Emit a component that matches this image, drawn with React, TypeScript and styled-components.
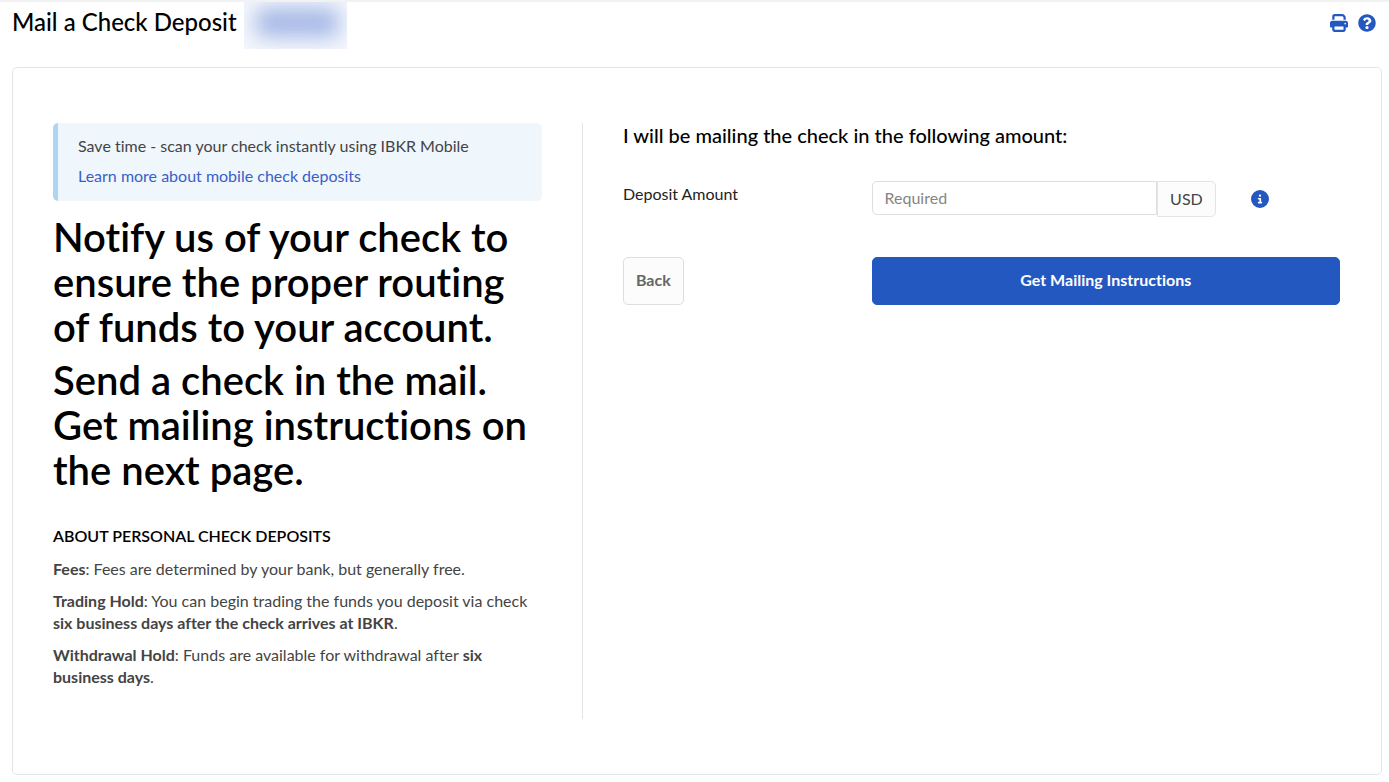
import React from 'react';
import styled, { createGlobalStyle } from 'styled-components';
import { FaQuestionCircle } from 'react-icons/fa';
import { FaPrint, FaCircleInfo } from 'react-icons/fa6';

const GlobalStyle = createGlobalStyle`
  *, *::before, *::after { box-sizing: border-box; }
  body {
    margin: 0;
    background: #fff;
    color: #444;
    font-family: Lato, 'Open Sans', sans-serif;
    font-size: 16px;
    line-height: 22px;
    font-variant-ligatures: none;
  }
  h1, h2, h3, p { margin: 0; }
  button, input { font: inherit; }
`;

const Page = styled.div`
  border-top: 2px solid #f2f2f2;
  padding: 0 7px 7px 12px;
`;

const Header = styled.header`
  display: flex;
  align-items: flex-start;
  height: 65px;
`;

const Title = styled.h1`
  padding-top: 4px;
  color: #000;
  font-size: 24px;
  line-height: 32px;
  font-weight: 500;
`;

const AccountBadge = styled.span`
  width: 103px;
  height: 47px;
  margin-left: 7px;
  padding: 6px 8px 12px 12px;
  overflow: hidden;
  background: #f3f6fc;

  &::before {
    content: '';
    display: block;
    height: 29px;
    border-radius: 8px;
    background: #a6b9e6;
    filter: blur(10px);
  }
`;

const HeaderActions = styled.div`
  display: flex;
  gap: 10px;
  margin-left: auto;
  padding: 12px 6px 0 0;
`;

const IconButton = styled.button`
  display: flex;
  padding: 0;
  border: 0;
  background: none;
  color: #2458c1;
  font-size: 18px;
  cursor: pointer;
`;

const Panel = styled.main`
  display: grid;
  grid-template-columns: 7fr 10fr;
  padding: 55px 41px 55px 40px;
  border: 1px solid #e3e4e5;
  border-radius: 5px;
`;

const Intro = styled.section`
  padding: 0 40px 31px 0;
  border-right: 1px solid #e3e4e5;
`;

const Notice = styled.aside`
  display: flex;
  flex-direction: column;
  gap: 8px;
  margin-bottom: 14px;
  padding: 12px 20px 14px;
  border-left: 5px solid #aed6f2;
  border-radius: 5px;
  background: #eff6fc;
`;

const TextLink = styled.a`
  color: #3a5fc8;
  text-decoration: none;
`;

const Headline = styled.h2`
  margin-bottom: 8px;
  color: #000;
  font-size: 40px;
  line-height: 45px;
  font-weight: 600;
`;

const SectionTitle = styled.h3`
  margin: 32px 0 11px;
  color: #000;
  font-size: 16px;
  line-height: 22px;
  font-weight: 600;
`;

const Detail = styled.p`
  & + & { margin-top: 10px; }
  strong { font-weight: 700; }
`;

const Form = styled.form`
  padding-left: 40px;
`;

const FormTitle = styled.h2`
  margin-bottom: 34px;
  color: #000;
  font-size: 20px;
  line-height: 24px;
  font-weight: 500;
`;

const FormRow = styled.div`
  display: grid;
  grid-template-columns: 7fr 15fr;
  column-gap: 30px;
  align-items: start;
  margin-bottom: 40px;
`;

const Label = styled.label`
  padding-top: 2px;
  color: #222;
`;

const AmountField = styled.div`
  display: grid;
  grid-template-columns: 27fr 7fr;
  column-gap: 35px;
  align-items: center;
`;

const InputGroup = styled.div`
  display: flex;
  align-items: flex-start;
`;

const AmountInput = styled.input`
  flex: 1;
  min-width: 0;
  height: 34px;
  padding: 0 12px 2px;
  border: 1px solid #dcdedf;
  border-radius: 5px 0 0 5px;
  background: #fff;
  color: #444;
  &::placeholder { color: #858585; opacity: 1; }
`;

const Currency = styled.span`
  height: 36px;
  padding: 6px 12px;
  border: 1px solid #e3e4e5;
  border-radius: 0 5px 5px 0;
  background: #fcfcfc;
`;

const Button = styled.button<{ $primary?: boolean }>`
  justify-self: ${(p) => (p.$primary ? 'stretch' : 'start')};
  height: 48px;
  padding: 0 12px 2px;
  border: 1px solid ${(p) => (p.$primary ? '#2458c1' : '#dcdedf')};
  border-radius: 5px;
  background: ${(p) => (p.$primary ? '#2458c1' : '#fcfcfc')};
  color: ${(p) => (p.$primary ? '#fff' : '#666')};
  font-weight: 700;
  cursor: pointer;
`;

export default function App() {
  return (
    <>
      <GlobalStyle />
      <Page>
        <Header>
          <Title>Mail a Check Deposit</Title>
          <AccountBadge aria-hidden="true" />
          <HeaderActions>
            <IconButton type="button" aria-label="Print"><FaPrint /></IconButton>
            <IconButton type="button" aria-label="Help"><FaQuestionCircle /></IconButton>
          </HeaderActions>
        </Header>
        <Panel>
          <Intro>
            <Notice>
              <p>Save time - scan your check instantly using IBKR Mobile</p>
              <TextLink href="#mobile-check">Learn more about mobile check deposits</TextLink>
            </Notice>
            <Headline>Notify us of your check to ensure the proper routing of funds to your account.</Headline>
            <Headline>Send a check in the mail. Get mailing instructions on the next page.</Headline>
            <SectionTitle>ABOUT PERSONAL CHECK DEPOSITS</SectionTitle>
            <Detail><strong>Fees</strong>: Fees are determined by your bank, but generally free.</Detail>
            <Detail>
              <strong>Trading Hold</strong>: You can begin trading the funds you deposit via check{' '}
              <strong>six business days after the check arrives at IBKR</strong>.
            </Detail>
            <Detail>
              <strong>Withdrawal Hold</strong>: Funds are available for withdrawal after{' '}
              <strong>six business days</strong>.
            </Detail>
          </Intro>
          <Form onSubmit={(e) => e.preventDefault()}>
            <FormTitle>I will be mailing the check in the following amount:</FormTitle>
            <FormRow>
              <Label htmlFor="amount">Deposit Amount</Label>
              <AmountField>
                <InputGroup>
                  <AmountInput id="amount" type="text" placeholder="Required" />
                  <Currency>USD</Currency>
                </InputGroup>
                <IconButton type="button" aria-label="Deposit amount information"><FaCircleInfo /></IconButton>
              </AmountField>
            </FormRow>
            <FormRow>
              <Button type="button">Back</Button>
              <Button type="submit" $primary>Get Mailing Instructions</Button>
            </FormRow>
          </Form>
        </Panel>
      </Page>
    </>
  );
}
